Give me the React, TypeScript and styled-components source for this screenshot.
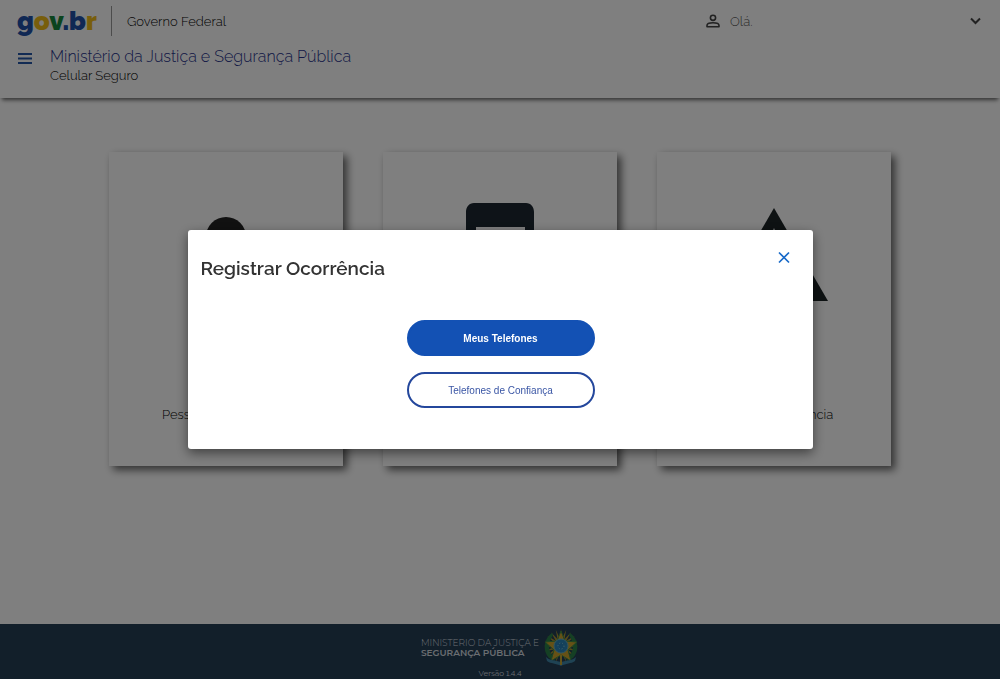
import React from "react";
import styled, { createGlobalStyle } from "styled-components";

const Global = createGlobalStyle`
  *, *::before, *::after { box-sizing: border-box; }
  body {
    margin: 0;
    background: #fff;
    color: #000;
    font-family: Raleway, Lato, sans-serif;
    font-size: 13px;
    font-weight: 300;
    font-variant-numeric: lining-nums;
  }
  h1, h2, p { margin: 0; font-weight: inherit; }
  button { font: inherit; cursor: pointer; }
`;

const Page = styled.div`
  min-height: 100vh;
  display: flex;
  flex-direction: column;
`;

const Header = styled.header`
  padding: 8px 16px 13px;
  box-shadow: 0 4px 4px -2px #666;
`;

const TopBar = styled.div`
  display: flex;
  align-items: center;
  height: 26px;
`;

const Logo = styled.a`
  width: 80px;
  padding-left: 1px;
  font: 900 26px/26px Raleway, Inter, sans-serif;
  text-decoration: none;
`;

const Letter = styled.span<{ $tone: string }>`
  color: ${(p) => p.$tone};
`;

const Agency = styled.span`
  height: 30px;
  margin-left: 15px;
  padding-left: 15px;
  border-left: 1px solid #999;
  line-height: 32px;
`;

const Account = styled.button`
  display: flex;
  align-items: center;
  gap: 10px;
  width: 278px;
  margin-left: auto;
  padding: 0;
  border: 0;
  background: none;
  color: #555;

  svg { color: #444; }
  svg:last-child { margin-left: auto; }
`;

const TitleBar = styled.div`
  display: flex;
  align-items: flex-start;
  gap: 16px;
  margin-top: 13px;
`;

const MenuButton = styled.button`
  display: flex;
  margin-top: 2px;
  padding: 0;
  border: 0;
  background: none;
  color: #2556a8;
`;

const Ministry = styled.h1`
  color: #25318a;
  font-size: 16px;
  line-height: 20px;
`;

const AppName = styled.p`
  line-height: 18px;
`;

const Main = styled.main`
  flex: 1;
  padding: 54px 24px;
`;

const Cards = styled.div`
  display: grid;
  grid-template-columns: repeat(3, 1fr);
  gap: 40px;
  max-width: 782px;
  margin: 0 auto;
`;

const Card = styled.a`
  display: flex;
  flex-direction: column;
  align-items: center;
  justify-content: space-between;
  min-height: 314px;
  padding: 45px 16px 44px;
  color: inherit;
  text-decoration: none;
  box-shadow: 4px 4px 8px #666;
`;

const Footer = styled.footer`
  display: flex;
  flex-direction: column;
  align-items: center;
  padding: 4px 16px 0;
  min-height: 55px;
  background: #243e54;
  color: #d5dbe0;
`;

const Signature = styled.div`
  display: flex;
  align-items: center;
  gap: 4px;
  font-family: Montserrat, Inter, sans-serif;
  font-size: 9px;
  line-height: 10px;
`;

const Department = styled.p`
  color: #d5dbe0;
`;

const Unit = styled.p`
  font-weight: 600;
`;

const Version = styled.p`
  font-size: 8px;
  font-weight: 400;
  line-height: 10px;
`;

const Backdrop = styled.div`
  position: fixed;
  inset: 0;
  display: flex;
  align-items: center;
  justify-content: center;
  background: rgba(0, 0, 0, 0.5);
`;

const Dialog = styled.section`
  width: 625px;
  max-width: 94%;
  padding: 20px 12px 41px 13px;
  border-radius: 3px;
  background: #fff;
  box-shadow: 0 4px 12px rgba(0, 0, 0, 0.5);
`;

const DialogHead = styled.div`
  display: flex;
  align-items: flex-start;
  justify-content: space-between;
  padding-right: 9px;
`;

const DialogTitle = styled.h2`
  padding-top: 6px;
  color: #333;
  font-size: 19px;
  font-weight: 600;
  line-height: 24px;
`;

const CloseButton = styled.button`
  display: flex;
  padding: 0;
  border: 0;
  background: none;
  color: #1769c8;
`;

const Actions = styled.div`
  display: flex;
  flex-direction: column;
  align-items: center;
  gap: 16px;
  margin-top: 40px;
`;

const Action = styled.button<{ $primary?: boolean }>`
  width: 188px;
  height: 36px;
  border: 2px solid ${(p) => (p.$primary ? "#1351b4" : "#24479c")};
  border-radius: 18px;
  background: ${(p) => (p.$primary ? "#1351b4" : "#fff")};
  color: ${(p) => (p.$primary ? "#fff" : "#3a56a5")};
  font-family: "Liberation Sans", Arial, sans-serif;
  font-size: 10px;
  font-weight: ${(p) => (p.$primary ? 700 : 400)};
`;

const PersonIcon = () => (
  <svg width="112" height="112" viewBox="0 0 112 112" aria-hidden="true">
    <circle cx="56" cy="40" r="20" fill="#222" />
    <path d="M20 100c0-22 18-32 36-32s36 10 36 32z" fill="#222" />
  </svg>
);

const PhoneIcon = () => (
  <svg width="112" height="112" viewBox="0 0 112 112" aria-hidden="true">
    <path
      fillRule="evenodd"
      fill="#1c2730"
      d="M30 6h52c5 0 8 4 8 9v88c0 5-3 9-8 9H30c-5 0-8-4-8-9V15c0-5 3-9 8-9zM32 30v62h49V30z"
    />
  </svg>
);

const AlertIcon = () => (
  <svg width="112" height="112" viewBox="0 0 112 112" aria-hidden="true">
    <path fill="#1c2426" d="M56 11l54 93H2z" />
    <path fill="#fff" d="M56 31l24 58H32z" />
    <path fill="#1c2426" d="M52 52h8v20h-8zM52 77h8v8h-8z" />
  </svg>
);

const UserIcon = () => (
  <svg width="14" height="14" viewBox="0 0 14 14" fill="none" stroke="currentColor" strokeWidth="1.6" aria-hidden="true">
    <circle cx="7" cy="3.8" r="2.6" />
    <path d="M1 12.8v-1.4c0-1.8 3-2.6 6-2.6s6 .8 6 2.6v1.4z" strokeLinejoin="round" />
  </svg>
);

const ChevronIcon = () => (
  <svg width="18" height="18" viewBox="0 0 18 18" fill="none" stroke="currentColor" strokeWidth="2" aria-hidden="true">
    <path d="M5 6.5l4.5 4.5L14 6.5" />
  </svg>
);

const MenuIcon = () => (
  <svg width="18" height="18" viewBox="0 0 18 18" stroke="currentColor" strokeWidth="2" aria-hidden="true">
    <path d="M2 5h14M2 9.500h14M2 14h14" />
  </svg>
);

const CloseIcon = () => (
  <svg width="16" height="16" viewBox="0 0 16 16" fill="none" stroke="currentColor" strokeWidth="1.7" aria-hidden="true">
    <path d="M3 2.5l10 10M13 2.5l-10 10" />
  </svg>
);

const rays = Array.from({ length: 20 }, (_, i) => i * 18);

const CoatOfArms = () => (
  <svg width="36" height="40" viewBox="0 0 36 40" role="img" aria-label="Brasão da República">
    {rays.map((a) => (
      <path key={a} d="M16 17L18 1l2 16z" fill="#a89232" transform={`rotate(${a} 18 18)`} />
    ))}
    <path d="M9 5C1 10-1 23 6 30l6 3-3-6c-4-5-4-12 1-20zM27 5c8 5 10 18 3 25l-6 3 3-6c4-5 4-12-1-20z" fill="#2b8048" />
    <path d="M18 3l4 10 12 1-9 8 3 11-10-6-10 6 3-11-9-8 12-1z" fill="#cca32c" stroke="#3f8a45" />
    <circle cx="18" cy="18" r="7" fill="#2a84b8" stroke="#5fabc2" />
    <circle cx="18" cy="18" r="3" fill="#287eb4" stroke="#8fd0d8" strokeDasharray="1 2" />
    <path d="M3 29c4 4 9 3 15 5 6-2 11-1 15-5l-1 4c-4 3-9 2-14 5-5-3-10-2-14-5z" fill="#3f86a8" />
    <path d="M17 27h2v10h-2z" fill="#c5a535" />
  </svg>
);

const logo: [string, string][] = [
  ["g", "#2050a8"],
  ["o", "#f0bd18"],
  ["v", "#16883c"],
  [".", "#2050a8"],
  ["b", "#2050a8"],
  ["r", "#f0bd18"],
];

const cards = [
  { label: "Pessoas de confiança", icon: <PersonIcon /> },
  { label: "Registrar telefone", icon: <PhoneIcon /> },
  { label: "Registrar ocorrência", icon: <AlertIcon /> },
];

export default function App() {
  return (
    <>
      <Global />
      <Page>
        <Header>
          <TopBar>
            <Logo href="#" aria-label="gov.br">
              {logo.map(([char, tone], i) => (
                <Letter key={i} $tone={tone}>{char}</Letter>
              ))}
            </Logo>
            <Agency>Governo Federal</Agency>
            <Account type="button">
              <UserIcon />
              <span>Olá.</span>
              <ChevronIcon />
            </Account>
          </TopBar>
          <TitleBar>
            <MenuButton type="button" aria-label="Menu"><MenuIcon /></MenuButton>
            <div>
              <Ministry>Ministério da Justiça e Segurança Pública</Ministry>
              <AppName>Celular Seguro</AppName>
            </div>
          </TitleBar>
        </Header>
        <Main>
          <Cards>
            {cards.map(({ label, icon }) => (
              <Card href="#" key={label}>
                {icon}
                <span>{label}</span>
              </Card>
            ))}
          </Cards>
        </Main>
        <Footer>
          <Signature>
            <div>
              <Department>MINISTERIO DA JUSTIÇA E</Department>
              <Unit>SEGURANÇA PÚBLICA</Unit>
            </div>
            <CoatOfArms />
          </Signature>
          <Version>Versão 1.4.4</Version>
        </Footer>
      </Page>
      <Backdrop>
        <Dialog role="dialog" aria-modal="true" aria-labelledby="dialog-title">
          <DialogHead>
            <DialogTitle id="dialog-title">Registrar Ocorrência</DialogTitle>
            <CloseButton type="button" aria-label="Fechar"><CloseIcon /></CloseButton>
          </DialogHead>
          <Actions>
            <Action type="button" $primary>Meus Telefones</Action>
            <Action type="button">Telefones de Confiança</Action>
          </Actions>
        </Dialog>
      </Backdrop>
    </>
  );
}
